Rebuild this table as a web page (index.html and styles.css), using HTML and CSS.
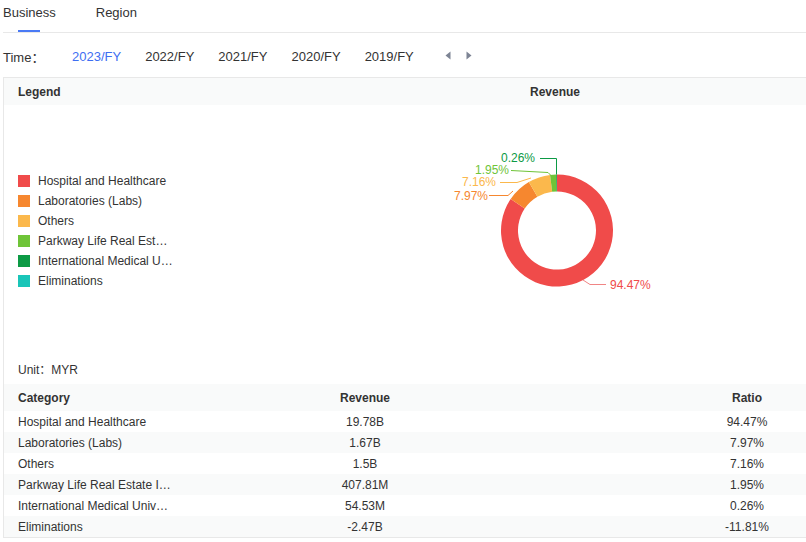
FILE: index.html
```html
<!DOCTYPE html>
<html lang="en">
<head>
<meta charset="utf-8">
<title>Business Revenue</title>
<link rel="stylesheet" href="styles.css">
</head>
<body>
<div class="page">
  <div class="tabs">
    <div class="tab active">Business</div>
    <div class="tab">Region</div>
  </div>
  <div class="time-row">
    <span class="time-label">Time：</span>
    <span class="year active">2023/FY</span>
    <span class="year">2022/FY</span>
    <span class="year">2021/FY</span>
    <span class="year">2020/FY</span>
    <span class="year">2019/FY</span>
    <span class="arrows">
      <svg class="arrow" width="6" height="9" viewBox="0 0 6 9"><path d="M5.5 0.5V8.5L0.5 4.5Z" fill="#7d8494"/></svg>
      <svg class="arrow" width="6" height="9" viewBox="0 0 6 9"><path d="M0.5 0.5V8.5L5.5 4.5Z" fill="#7d8494"/></svg>
    </span>
  </div>
  <div class="card">
    <div class="chart-head">
      <div class="head-legend">Legend</div>
      <div class="head-chart">Revenue</div>
    </div>
    <div class="chart-body">
      <ul class="legend">
        <li><i class="sw c-red"></i>Hospital and Healthcare</li>
        <li><i class="sw c-orange"></i>Laboratories (Labs)</li>
        <li><i class="sw c-yellow"></i>Others</li>
        <li><i class="sw c-lgreen"></i>Parkway Life Real Est…</li>
        <li><i class="sw c-dgreen"></i>International Medical U…</li>
        <li><i class="sw c-teal"></i>Eliminations</li>
      </ul>
      <div class="donut-wrap">
        <svg class="donut" width="502" height="252" viewBox="304 105 502 252">
          <path fill="#f04b4a" d="M557 174.5A56 56 0 1 1 510.67 199.04L524.73 208.59A39 39 0 1 0 557 191.5Z"/>
          <path fill="#f6872f" d="M510.67 199.04A56 56 0 0 1 528.85 182.09L537.40 196.78A39 39 0 0 0 524.73 208.59Z"/>
          <path fill="#fbb84c" d="M528.85 182.09A56 56 0 0 1 550.06 174.93L552.17 191.80A39 39 0 0 0 537.40 196.78Z"/>
          <path fill="#6fc438" d="M550.06 174.93A56 56 0 0 1 556.18 174.51L556.43 191.50A39 39 0 0 0 552.17 191.80Z"/>
          <path fill="#0c9a45" d="M556.18 174.51A56 56 0 0 1 557 174.5L557 191.5A39 39 0 0 0 556.43 191.50Z"/>
          <g fill="none" stroke-width="1">
            <polyline stroke="#0c9a45" points="540,158.5 556.5,158.5 556.5,174.5"/>
            <polyline stroke="#6fc438" points="511,170.5 548,172.5 551,175.5"/>
            <polyline stroke="#fbb84c" points="500,182.5 517,182.5 531,178"/>
            <polyline stroke="#f6872f" points="489,195.5 508,195.5 513,191"/>
            <polyline stroke="#f08585" points="583,280 590,284.5 606,284.5"/>
          </g>
          <text x="501" y="162" fill="#0c9a45">0.26%</text>
          <text x="475" y="173.5" fill="#6fc438">1.95%</text>
          <text x="462" y="186" fill="#fbb84c">7.16%</text>
          <text x="454" y="199.5" fill="#f6872f">7.97%</text>
          <text x="610" y="288.5" fill="#f04b4a">94.47%</text>
        </svg>
      </div>
    </div>
    <div class="unit">Unit：MYR</div>
    <table class="data">
      <colgroup>
        <col class="col-cat"><col class="col-rev"><col class="col-gap"><col class="col-ratio">
      </colgroup>
      <thead>
        <tr><th class="left">Category</th><th>Revenue</th><th></th><th>Ratio</th></tr>
      </thead>
      <tbody>
        <tr><td class="left">Hospital and Healthcare</td><td>19.78B</td><td></td><td>94.47%</td></tr>
        <tr><td class="left">Laboratories (Labs)</td><td>1.67B</td><td></td><td>7.97%</td></tr>
        <tr><td class="left">Others</td><td>1.5B</td><td></td><td>7.16%</td></tr>
        <tr><td class="left">Parkway Life Real Estate I…</td><td>407.81M</td><td></td><td>1.95%</td></tr>
        <tr><td class="left">International Medical Univ…</td><td>54.53M</td><td></td><td>0.26%</td></tr>
        <tr><td class="left">Eliminations</td><td>-2.47B</td><td></td><td>-11.81%</td></tr>
      </tbody>
    </table>
  </div>
</div>
</body>
</html>
```

FILE: styles.css
```css
html, body {
  margin: 0;
  padding: 0;
  background: #fff;
}
body {
  font-family: "Liberation Sans", Arial, "Noto Sans CJK SC", sans-serif;
  color: #333;
  font-size: 12px;
}
.page {
  padding-left: 3px;
}
.tabs {
  display: flex;
  gap: 40px;
  height: 32px;
  border-bottom: 1px solid #e8e8e8;
}
.tab {
  position: relative;
  font-size: 13px;
  line-height: 26px;
  height: 32px;
  color: #333;
}
.tab.active::after {
  content: "";
  position: absolute;
  left: 50%;
  margin-left: -11px;
  bottom: 0;
  width: 22px;
  height: 2px;
  background: #4a7af5;
}
.time-row {
  display: flex;
  align-items: center;
  height: 42px;
  padding-top: 2px;
  font-size: 13px;
}
.time-label {
  width: 69px;
  color: #333;
}
.year {
  margin-right: 24px;
  color: #333;
}
.year.active {
  color: #3e6ef2;
}
.arrows {
  display: flex;
  align-items: center;
  gap: 15px;
  margin-left: 7px;
  margin-top: -1px;
}
.arrow {
  display: block;
}
.card {
  border: 1px solid #e8e8e8;
  border-right: none;
}
.chart-head {
  display: grid;
  grid-template-columns: 300px 1fr;
  height: 27px;
  line-height: 28px;
  background: #f9fafa;
  font-weight: bold;
  color: #333;
}
.head-legend {
  padding-left: 14px;
}
.head-chart {
  text-align: center;
}
.chart-body {
  display: grid;
  grid-template-columns: 300px 1fr;
  height: 252px;
}
.legend {
  list-style: none;
  margin: 0;
  padding: 0 0 0 14px;
  display: flex;
  flex-direction: column;
  justify-content: center;
}
.legend li {
  display: flex;
  align-items: center;
  gap: 8px;
  height: 20px;
  line-height: 20px;
  white-space: nowrap;
  color: #333;
}
.sw {
  display: block;
  width: 12px;
  height: 12px;
}
.c-red { background: #f04b4a; }
.c-orange { background: #f6872f; }
.c-yellow { background: #fbb84c; }
.c-lgreen { background: #6fc438; }
.c-dgreen { background: #0c9a45; }
.c-teal { background: #1ac5b8; }
.donut-wrap {
  overflow: hidden;
}
.donut {
  display: block;
}
.donut text {
  font-family: "Liberation Sans", Arial, sans-serif;
  font-size: 12px;
}
.unit {
  height: 27px;
  line-height: 27px;
  padding-left: 14px;
  color: #333;
}
.data {
  width: 100%;
  table-layout: fixed;
  border-collapse: collapse;
  font-size: 12px;
}
.col-cat { width: 276px; }
.col-rev { width: 170px; }
.col-ratio { width: 118px; }
.data th, .data td {
  padding: 0;
  text-align: center;
  white-space: nowrap;
  overflow: hidden;
  color: #333;
}
.data th {
  height: 27px;
  font-weight: bold;
  background: #f9fafa;
}
.data td {
  height: 21px;
}
.data .left {
  text-align: left;
  padding-left: 14px;
}
.data tbody tr:nth-child(even) td {
  background: #f9fafa;
}
```
